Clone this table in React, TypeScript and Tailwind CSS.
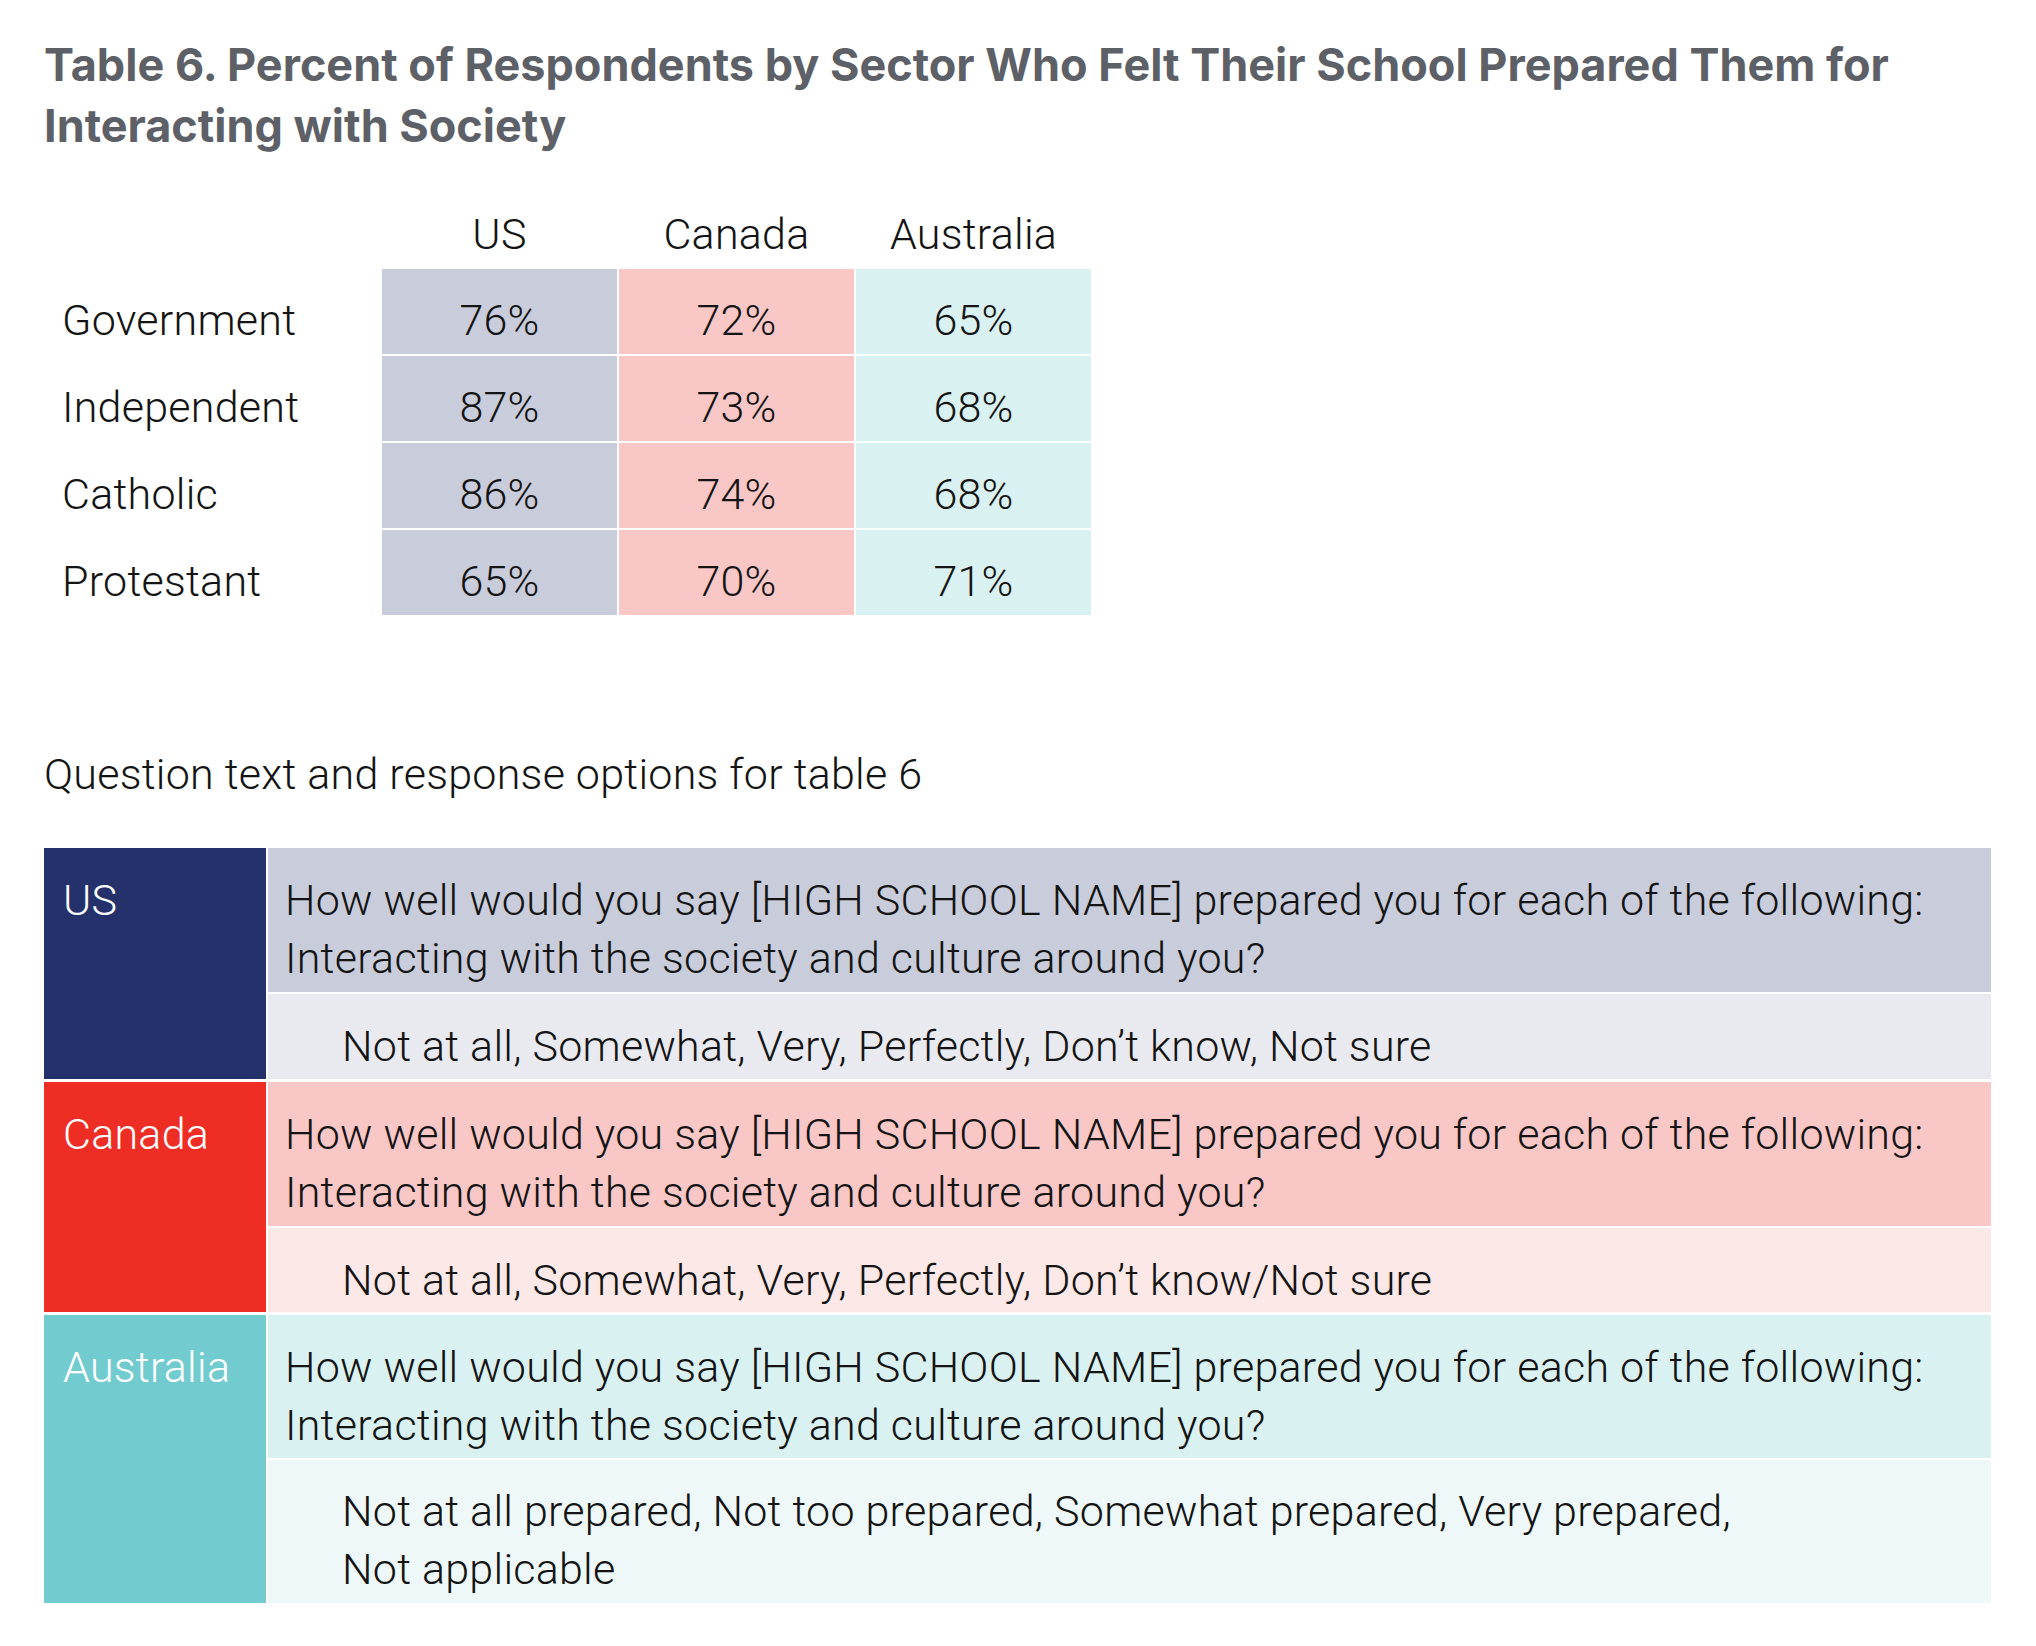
import React from "react";

type Row = { label: string; us: string; ca: string; au: string };

const rows: Row[] = [
  { label: "Government", us: "76%", ca: "72%", au: "65%" },
  { label: "Independent", us: "87%", ca: "73%", au: "68%" },
  { label: "Catholic", us: "86%", ca: "74%", au: "68%" },
  { label: "Protestant", us: "65%", ca: "70%", au: "71%" },
];

function QuestionText() {
  return (
    <>
      How well would you say [HIGH SCHOOL NAME] prepared you for each of the following:
      <br />
      Interacting with the society and culture around you?
    </>
  );
}

export default function App() {
  return (
    <div className="min-h-screen bg-white pl-[44px] pt-[34px] font-['Roboto',sans-serif] font-[350] text-[43px] leading-[58px] tracking-[0.25px] text-[#141414]">
      <h1 className="w-[1900px] font-['Inter',sans-serif] text-[45px] font-bold leading-[61px] tracking-normal text-[#5d6067]">
        Table 6. Percent of Respondents by Sector Who Felt Their School Prepared Them for Interacting with Society
      </h1>

      {/* Top table */}
      <div className="mt-[49px] flex flex-col">
        <div className="grid h-[64px] grid-cols-[336px_235px_235px_235px] gap-x-[2px]">
          <div />
          <div className="text-center">US</div>
          <div className="text-center">Canada</div>
          <div className="text-center">Australia</div>
        </div>
        <div className="grid grid-cols-[336px_235px_235px_235px] gap-x-[2px] gap-y-[2px]">
          {rows.map((r) => (
            <React.Fragment key={r.label}>
              <div className="h-[85px] pl-[18px] pt-[22px]">{r.label}</div>
              <div className="h-[85px] bg-[#c9ccdb] pt-[22px] text-center">{r.us}</div>
              <div className="h-[85px] bg-[#f9c7c6] pt-[22px] text-center">{r.ca}</div>
              <div className="h-[85px] bg-[#d9f1f1] pt-[22px] text-center">{r.au}</div>
            </React.Fragment>
          ))}
        </div>
      </div>

      <p className="mt-[130px]">Question text and response options for table 6</p>

      {/* Lower table */}
      <div className="mt-[45px] flex w-[1947px] flex-col gap-[3px]">
        <div className="flex gap-[2px]">
          <div className="w-[222px] shrink-0 bg-[#25316b] pl-[19px] pt-[23px] text-white">US</div>
          <div className="flex flex-1 flex-col gap-[2px]">
            <div className="h-[144px] bg-[#c9ccdb] pl-[17px] pt-[23px]">
              <QuestionText />
            </div>
            <div className="h-[85px] bg-[#e9eaf0] pl-[74px] pt-[23px]">
              Not at all, Somewhat, Very, Perfectly, Don’t know, Not sure
            </div>
          </div>
        </div>

        <div className="flex gap-[2px]">
          <div className="w-[222px] shrink-0 bg-[#ee2e25] pl-[19px] pt-[23px] text-white">Canada</div>
          <div className="flex flex-1 flex-col gap-[2px]">
            <div className="h-[144px] bg-[#f9c7c6] pl-[17px] pt-[23px]">
              <QuestionText />
            </div>
            <div className="h-[84px] bg-[#fde8e8] pl-[74px] pt-[23px]">
              Not at all, Somewhat, Very, Perfectly, Don’t know/Not sure
            </div>
          </div>
        </div>

        <div className="flex gap-[2px]">
          <div className="w-[222px] shrink-0 bg-[#71cbcf] pl-[19px] pt-[23px] text-white">Australia</div>
          <div className="flex flex-1 flex-col gap-[2px]">
            <div className="h-[143px] bg-[#d9f1f1] pl-[17px] pt-[23px]">
              <QuestionText />
            </div>
            <div className="h-[143px] bg-[#eef8f8] pl-[74px] pt-[22px]">
              Not at all prepared, Not too prepared, Somewhat prepared, Very prepared,
              <br />
              Not applicable
            </div>
          </div>
        </div>
      </div>
    </div>
  );
}
